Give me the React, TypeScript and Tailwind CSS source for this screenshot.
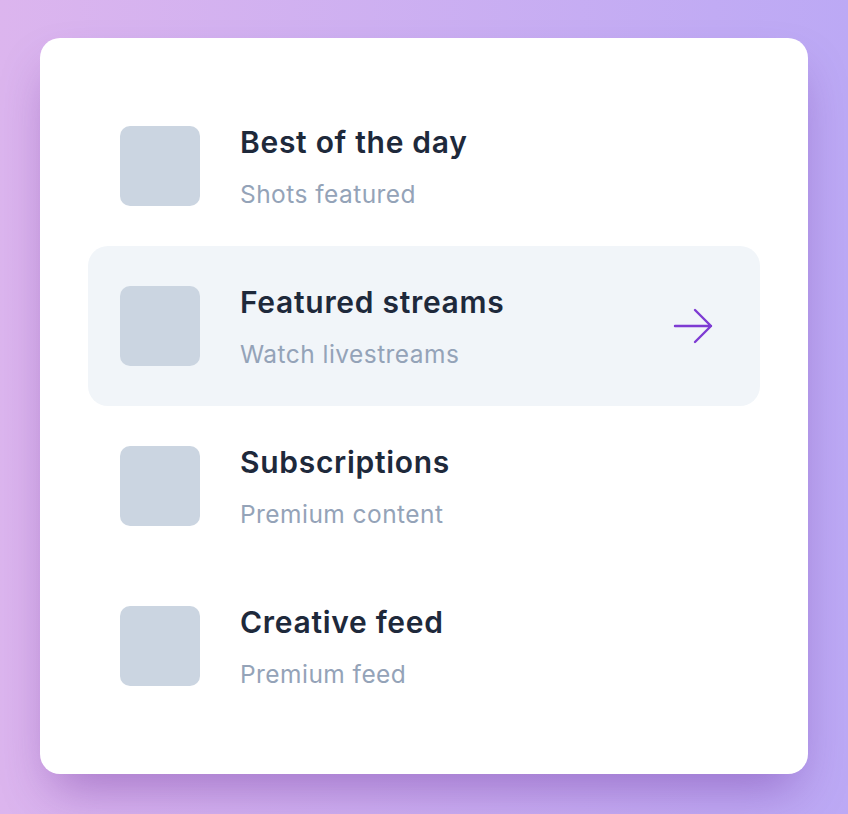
import React from 'react';

const items = [
    { title: 'Best of the day', subtitle: 'Shots featured' },
    { title: 'Featured streams', subtitle: 'Watch livestreams', active: true },
    { title: 'Subscriptions', subtitle: 'Premium content' },
    { title: 'Creative feed', subtitle: 'Premium feed' },
];

export default function App() {
    return (
        <div
            className="min-h-screen w-full bg-gradient-to-r from-[#dcb5ee] to-[#bca9f5] flex justify-center pt-[38px]"
            style={{ fontFamily: 'Inter, "Noto Sans", sans-serif' }}
        >
            <div className="w-[768px] h-[736px] bg-white rounded-[20px] shadow-2xl shadow-purple-900/40 px-12 py-12 flex flex-col">
                {items.map((item) => (
                    <div
                        key={item.title}
                        className={`h-[160px] flex items-center px-8 rounded-[20px] ${item.active ? 'bg-[#f1f5f9]' : ''}`}
                    >
                        <div className="w-20 h-20 rounded-[10px] bg-[#cbd5e1] shrink-0"></div>
                        <div className="ml-10 flex flex-col flex-1">
                            <span className="text-[30px] leading-[36px] font-semibold text-[#1e293b] tracking-[0.7px]">
                                {item.title}
                            </span>
                            <span className="mt-5 text-[24.5px] leading-[28px] text-[#94a3b8] tracking-[0.45px]">
                                {item.subtitle}
                            </span>
                        </div>
                        {/* arrow */}
                        {item.active && (
                            <svg
                                className="w-10 h-9 mr-[15px] text-[#7e3bd3]"
                                viewBox="0 0 40 36"
                                fill="none"
                                stroke="currentColor"
                                strokeWidth="2.4"
                                strokeLinecap="round"
                                strokeLinejoin="round"
                            >
                                <path d="M2 18h36M22 2l16 16-16 16" />
                            </svg>
                        )}
                    </div>
                ))}
            </div>
        </div>
    );
}
